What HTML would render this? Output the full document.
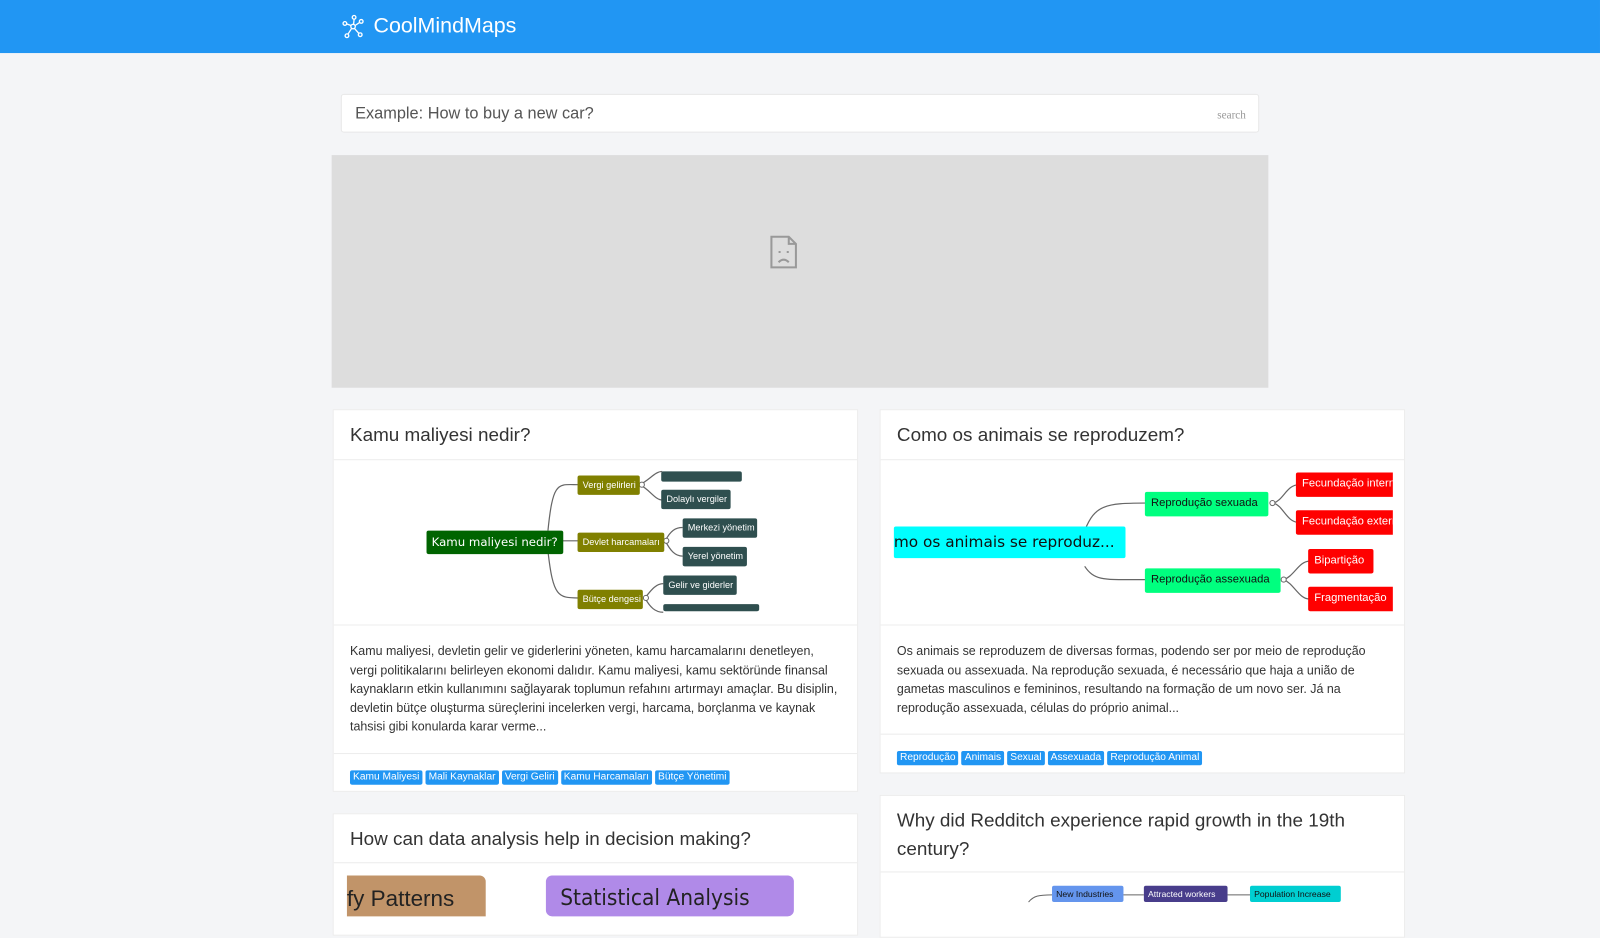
<!DOCTYPE html>
<html><head><meta charset="utf-8"><style>
*{box-sizing:border-box;margin:0;padding:0}
body{width:1600px;height:900px;overflow:hidden;background:#f4f5f7;font-family:"Liberation Sans",Arial,sans-serif;position:relative}
#w{position:absolute;left:0;top:0;width:1568px;height:882px;transform:scale(1.0204);transform-origin:0 0}
.nav{position:absolute;left:0;top:0;width:1568px;height:52px;background:#2196f3}
.logo{position:absolute;left:366px;top:14px;color:#fff;font-size:21px}
.search{position:absolute;left:334px;top:92px;width:900px;height:38px;background:#fff;border:1px solid #e8e8e8;border-radius:3px}
.search span{position:absolute;left:13px;top:10px;font-size:16px;color:#555}
.search i{position:absolute;right:12px;top:14px;font-size:11px;color:#999;font-family:"Liberation Serif",serif;font-style:normal}
.ad{position:absolute;left:325px;top:152px;width:918px;height:228px;background:#ddd}
.card{position:absolute;background:#fff;border:1px solid #ececec;overflow:hidden}
.card h2{font-weight:normal;font-size:18.5px;color:#333;padding:10px 16px 0;line-height:28px}
.sep{position:absolute;left:0;right:0;height:1px;background:#ececec}
.txt{position:absolute;left:16px;right:16px;font-size:12.2px;line-height:18.5px;color:#333}
.tags{position:absolute;left:16px;white-space:nowrap}
.tag{display:inline-block;background:#2196f3;color:#fff;font-size:10px;padding:1px 3px;border-radius:2px;margin-right:3px;line-height:12px}
.n{position:absolute;color:#fff;font-family:"Liberation Sans",sans-serif;border-radius:2px;white-space:nowrap;overflow:hidden}
.s{font-size:9px;padding:4px 5px;height:19px}
</style></head><body><div id="w">
<div class="nav">
<svg style="position:absolute;left:334px;top:14px" width="24" height="24" viewBox="0 0 24 24" fill="none" stroke="#fff" stroke-width="1.3"><circle cx="12" cy="12" r="2.2"/><circle cx="4" cy="9" r="1.8"/><circle cx="13" cy="3" r="1.8"/><circle cx="20" cy="7" r="1.8"/><circle cx="6" cy="21" r="1.8"/><circle cx="19" cy="20" r="1.8"/><path d="M10 11L6 9.5M12.5 10L13 5M14 11L18.5 8M10.5 14L7 19.5M13.5 14L17.5 18.5"/></svg>
<div class="logo">CoolMindMaps</div></div>
<div class="search"><span>Example: How to buy a new car?</span><i>search</i></div>
<div class="ad"><svg style="position:absolute;left:429px;top:78px" width="28" height="34" viewBox="0 0 28 34" fill="none" stroke="#999" stroke-width="2"><path d="M2 2H19L26 9V32H2Z M19 2V9H26"/><path d="M9 27Q14 22 19 27"/><path d="M9 17h2M17 17h2"/></svg></div>

<div class="card" style="left:326px;top:401px;width:515px;height:375px">
<h2>Kamu maliyesi nedir?</h2>
<div class="sep" style="top:48px"></div>
<svg style="position:absolute;left:0;top:48px" width="515" height="162"><g fill="none" stroke="#666" stroke-width="1.2"><path d="M210 70C215 20 220 25 240 25M224 80H240M210 90C215 135 220 136 240 136M300 25C310 20 315 12 322 12M300 25C310 30 315 40 322 40M325 80C330 70 335 67 342 67M325 80C330 90 335 95 342 95M305 136C310 130 315 122 323 122M305 136C310 145 315 150 323 150"/></g>
<g fill="#fff" stroke="#666"><circle cx="302" cy="25" r="2.5"/><circle cx="326" cy="80" r="2.5"/><circle cx="306" cy="136" r="2.5"/></g>
</svg>
<div class="n" style="left:91px;top:118px;width:134px;height:23px;background:#006400;padding:4px 5px;font-family:'DejaVu Sans',sans-serif;font-size:11.5px">Kamu maliyesi nedir?</div>
<div class="n s" style="left:239px;top:64px;width:61px;background:#808000">Vergi gelirleri</div>
<div class="n s" style="left:239px;top:120px;width:85px;background:#808000">Devlet harcamaları</div>
<div class="n s" style="left:239px;top:176px;width:64px;background:#808000">Bütçe dengesi</div>
<div class="n" style="left:321px;top:60px;width:79px;height:10px;background:#2f4f4f"></div>
<div class="n s" style="left:321px;top:78px;width:68px;background:#2f4f4f">Dolaylı vergiler</div>
<div class="n s" style="left:342px;top:106px;width:73px;background:#2f4f4f">Merkezi yönetim</div>
<div class="n s" style="left:342px;top:134px;width:63px;background:#2f4f4f">Yerel yönetim</div>
<div class="n s" style="left:323px;top:162px;width:72px;background:#2f4f4f">Gelir ve giderler</div>
<div class="n" style="left:323px;top:190px;width:94px;height:7px;background:#2f4f4f"></div>
<div class="sep" style="top:210px"></div>
<div class="txt" style="top:227px">Kamu maliyesi, devletin gelir ve giderlerini yöneten, kamu harcamalarını denetleyen, vergi politikalarını belirleyen ekonomi dalıdır. Kamu maliyesi, kamu sektöründe finansal kaynakların etkin kullanımını sağlayarak toplumun refahını artırmayı amaçlar. Bu disiplin, devletin bütçe oluşturma süreçlerini incelerken vergi, harcama, borçlanma ve kaynak tahsisi gibi konularda karar verme...</div>
<div class="sep" style="top:336px"></div>
<div class="tags" style="top:349px"><span class="tag">Kamu Maliyesi</span><span class="tag">Mali Kaynaklar</span><span class="tag">Vergi Geliri</span><span class="tag">Kamu Harcamaları</span><span class="tag">Bütçe Yönetimi</span></div>
</div>

<div class="card" style="left:862px;top:401px;width:515px;height:357px">
<h2>Como os animais se reproduzem?</h2>
<div class="sep" style="top:48px"></div>
<svg style="position:absolute;left:0;top:48px" width="515" height="162"><g fill="none" stroke="#666" stroke-width="1.2"><path d="M200 70C210 45 220 43 260 43M200 105C210 120 220 118 260 118M385 43C395 40 398 25 410 25M385 43C395 46 398 62 410 62M395 118C405 115 410 100 420 100M395 118C405 122 410 137 420 137"/></g><g fill="#fff" stroke="#666"><circle cx="384" cy="43" r="2.5"/><circle cx="395" cy="118" r="2.5"/></g></svg>
<div class="n" style="left:13px;top:114px;width:227px;height:31px;background:#00ffff;color:#111;font-size:15px;padding:6px 0 0 0;font-family:'DejaVu Sans',sans-serif">mo os animais se reproduz...</div>
<div class="n" style="left:259px;top:80px;width:121px;height:24px;background:#00ff7f;color:#111;font-size:11px;padding:5px 6px">Reprodução sexuada</div>
<div class="n" style="left:259px;top:155px;width:133px;height:24px;background:#00ff7f;color:#111;font-size:11px;padding:5px 6px">Reprodução assexuada</div>
<div class="n" style="left:407px;top:61px;width:95px;height:24px;background:#f00;font-size:11px;padding:5px 6px;border-radius:2px 0 0 2px">Fecundação interna</div>
<div class="n" style="left:407px;top:98px;width:95px;height:24px;background:#f00;font-size:11px;padding:5px 6px;border-radius:2px 0 0 2px">Fecundação externa</div>
<div class="n" style="left:419px;top:136px;width:64px;height:24px;background:#f00;font-size:11px;padding:5px 6px">Bipartição</div>
<div class="n" style="left:419px;top:173px;width:83px;height:24px;background:#f00;font-size:11px;padding:5px 6px;border-radius:2px 0 0 2px">Fragmentação</div>
<div class="sep" style="top:210px"></div>
<div class="txt" style="top:227px">Os animais se reproduzem de diversas formas, podendo ser por meio de reprodução sexuada ou assexuada. Na reprodução sexuada, é necessário que haja a união de gametas masculinos e femininos, resultando na formação de um novo ser. Já na reprodução assexuada, células do próprio animal...</div>
<div class="sep" style="top:317px"></div>
<div class="tags" style="top:330px"><span class="tag">Reprodução</span><span class="tag">Animais</span><span class="tag">Sexual</span><span class="tag">Assexuada</span><span class="tag">Reprodução Animal</span></div>
</div>

<div class="card" style="left:326px;top:797px;width:515px;height:120px">
<h2>How can data analysis help in decision making?</h2>
<div class="sep" style="top:47px"></div>
<div class="n" style="left:13px;top:60px;width:136px;height:40px;background:#c19469;color:#222;font-size:22px;padding:10px 0 0 0;border-radius:0 6px 0 0">fy Patterns</div>
<div class="n" style="left:208px;top:60px;width:243px;height:40px;background:#b08ae8;color:#222;font-size:22px;padding:10px 0 0 14px;border-radius:6px;font-family:'DejaVu Sans Condensed','Liberation Sans Narrow',sans-serif">Statistical Analysis</div>
</div>

<div class="card" style="left:862px;top:779px;width:515px;height:140px">
<h2>Why did Redditch experience rapid growth in the 19th century?</h2>
<div class="sep" style="top:74px"></div>
<svg style="position:absolute;left:0;top:74px" width="515" height="60"><path d="M145 30C150 24 155 23 168 23M238 23H258M340 23H362" stroke="#666" fill="none"/></svg>
<div class="n" style="left:168px;top:88px;width:70px;height:16px;background:#6495ed;color:#111;font-size:8.5px;padding:3px 4px">New Industries</div>
<div class="n" style="left:258px;top:88px;width:82px;height:16px;background:#483d8b;font-size:8.5px;padding:3px 4px">Attracted workers</div>
<div class="n" style="left:362px;top:88px;width:89px;height:16px;background:#00ced1;color:#111;font-size:8.5px;padding:3px 4px">Population Increase</div>
</div>
</div></body></html>
